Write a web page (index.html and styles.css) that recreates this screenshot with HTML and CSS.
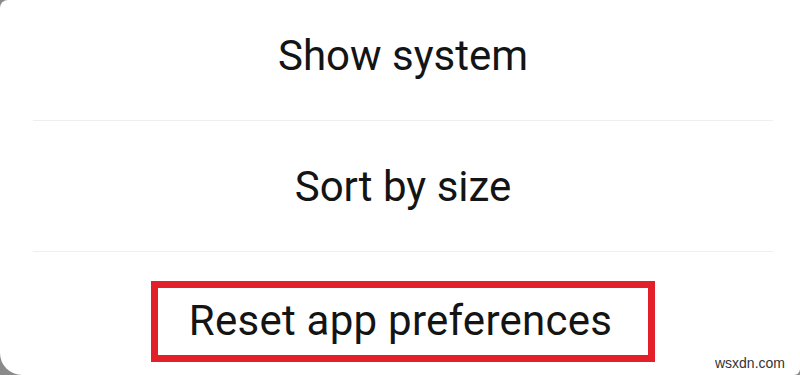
FILE: index.html
```html
<!DOCTYPE html>
<html lang="en">
<head>
    <meta charset="UTF-8">
    <meta name="viewport" content="width=device-width, initial-scale=1.0">
    <title>App options</title>
    <link rel="stylesheet" href="styles.css">
</head>
<body>
    <div class="sheet">
        <ul class="menu">
            <li class="menu-item">Show system</li>
            <li class="menu-item">Sort by size</li>
            <li class="menu-item last">
                <span class="highlight">Reset app preferences</span>
            </li>
        </ul>
    </div>
    <div class="watermark">wsxdn.com</div>
</body>
</html>
```

FILE: styles.css
```css
:root {
    --text-color: #141414;
    --divider-color: #efefef;
    --mark-color: #e3202a;
}
html, body {
    margin: 0;
    padding: 0;
    height: 100%;
    overflow: hidden;
}
body {
    background-color: #8a8a8a;
    font-family: Roboto, "Noto Sans", sans-serif;
    color: var(--text-color);
}
.sheet {
    height: 375px;
    background-color: #fff;
    border-radius: 8px 0 6px 22px;
    overflow: hidden;
}
.menu {
    list-style: none;
    margin: -10px 0 0 0;
    padding: 0 0 0 5px;
}
.menu-item {
    height: 131px;
    display: flex;
    align-items: center;
    justify-content: center;
    font-size: 42px;
    margin: 0 27px 0 28px;
    border-bottom: 1px solid var(--divider-color);
    box-sizing: border-box;
}
.menu-item.last {
    border-bottom: none;
    padding-top: 7px;
}
.highlight {
    display: inline-block;
    border: 7px solid var(--mark-color);
    padding: 8px 36px 10px 31px;
    letter-spacing: 0.25px;
}
.watermark {
    position: absolute;
    right: 15px;
    bottom: 4px;
    font-family: "Liberation Sans", Arial, sans-serif;
    font-size: 14px;
    color: #333;
}
```
